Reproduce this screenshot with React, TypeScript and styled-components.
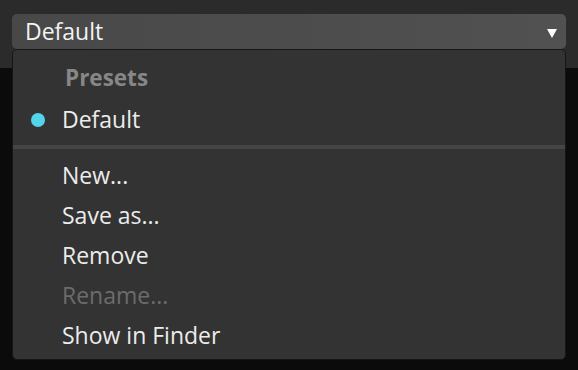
import { createGlobalStyle, styled } from "styled-components";

const GlobalStyle = createGlobalStyle`
    html, body {
        margin: 0;
        padding: 0;
        background: #0b0b0b;
    }
    body {
        font-family: 'Open Sans', 'Noto Sans', sans-serif;
        -webkit-font-smoothing: antialiased;
    }
`;

const Page = styled.div`
    position: relative;
    width: 578px;
    height: 370px;
    background: #0b0b0b;
    overflow: hidden;
`;

const TopBar = styled.div`
    height: 68px;
    background: #2b2b2b;
    padding: 14px 12px 0 12px;
    box-sizing: border-box;
`;

const SelectButton = styled.div`
    display: flex;
    align-items: center;
    justify-content: space-between;
    height: 35px;
    padding: 0 9px 0 13px;
    box-sizing: border-box;
    border-radius: 5px;
    background: linear-gradient(90deg, #484848 0%, #515151 100%);
    color: #f2f2f2;
    font-size: 23px;
    line-height: 35px;
`;

const Caret = styled.svg`
    width: 10px;
    height: 9px;
    margin-top: 3px;
`;

const Menu = styled.div`
    position: absolute;
    top: 49px;
    left: 12px;
    width: 554px;
    height: 311px;
    box-sizing: border-box;
    padding-top: 7px;
    background: #333333;
    border: 1px solid #161616;
    border-radius: 5px;
`;

const Header = styled.div`
    height: 42px;
    line-height: 42px;
    padding-left: 52px;
    font-size: 22.5px;
    font-weight: 700;
    color: #878787;
`;

const Item = styled.div<{ $disabled?: boolean }>`
    position: relative;
    height: 40px;
    line-height: 40px;
    padding-left: 49px;
    font-size: 23px;
    color: ${(p) => (p.$disabled ? "#6c6c6c" : "#ececec")};
    white-space: nowrap;
`;

const Bullet = styled.span`
    position: absolute;
    left: 18px;
    top: 14px;
    width: 14px;
    height: 14px;
    border-radius: 50%;
    background: #52d4ea;
`;

const Separator = styled.div`
    height: 4px;
    margin: 6px 0;
    background: #454545;
`;

export default function App() {
    return (
        <Page>
            <GlobalStyle />
            <TopBar>
                <SelectButton>
                    <span>Default</span>
                    <Caret viewBox="0 0 10 9">
                        <path d="M0 0 H10 L5 9 Z" fill="#ffffff" />
                    </Caret>
                </SelectButton>
            </TopBar>
            <Menu>
                <Header>Presets</Header>
                <Item>
                    <Bullet />
                    Default
                </Item>
                <Separator />
                <Item>New...</Item>
                <Item>Save as...</Item>
                <Item>Remove</Item>
                <Item $disabled>Rename...</Item>
                <Item>Show in Finder</Item>
            </Menu>
        </Page>
    );
}
